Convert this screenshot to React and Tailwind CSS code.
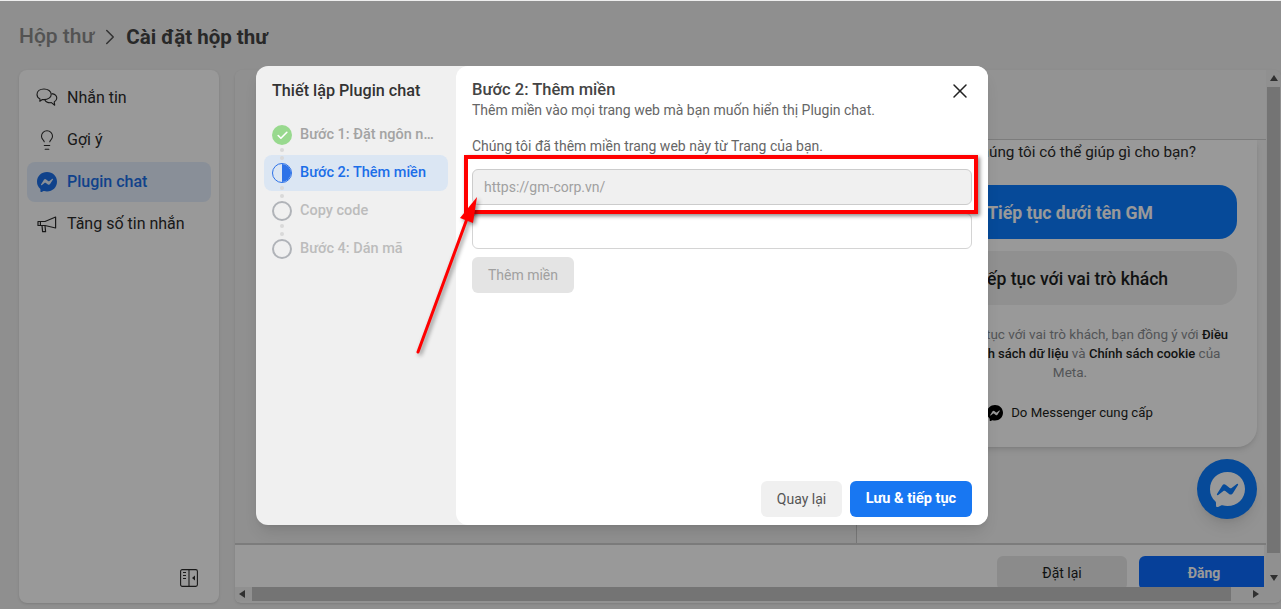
import React from "react";
import { SiMessenger } from "react-icons/si";
import { ChevronRight, Lightbulb, X, Check } from "lucide-react";

const font = { fontFamily: '"Roboto", "Liberation Sans", sans-serif' };

function ChatIcon() {
  return (
    <svg width="22" height="20" viewBox="0 0 22 20" fill="none" stroke="currentColor" strokeWidth="1.1" strokeLinejoin="round" className="shrink-0">
      <path d="M8 1C4 1 1 3.2 1 6.4c0 2 1.2 3.6 3 4.5l-.2 2.4 2.6-1.8c.5.1 1 .1 1.6.1 4 0 7.2-2.2 7.2-5.2C15.2 3.2 12 1 8 1z" />
      <path d="M15.6 5.6c2.9.4 5.2 2 5.2 4.5 0 1.7-1 3-2.6 3.8l.5 3.3-3.3-2.6c-.3 0-.6.1-1 .1-2.6 0-4.9-1.2-5.6-3" />
    </svg>
  );
}

function MegaphoneIcon() {
  return (
    <svg width="20" height="18" viewBox="0 0 20 18" fill="none" stroke="currentColor" strokeWidth="1.2" strokeLinejoin="round" className="shrink-0">
      <path d="M1 6.5h7L18.6 2v11L8 10.5H1z" />
      <path d="M5 10.5l.6 6.2h3L8 10.8" />
      <path d="M3.4 6.5v4" />
    </svg>
  );
}

function CollapseIcon() {
  return (
    <svg width="18" height="18" viewBox="0 0 18 18" fill="none" stroke="#2b2b2b" strokeWidth="1.1">
      <rect x="0.6" y="0.6" width="16.8" height="16.8" rx="1.6" />
      <path d="M9 0.6v16.8M3 3.5h3M3 6.5h3M3 9.5h3" />
      <path d="M15 6.5v5l-3-2.5z" fill="#2b2b2b" stroke="none" />
    </svg>
  );
}

function Arrow({ dir }) {
  const pts = { up: "5,1 9,7 1,7", down: "1,2 9,2 5,8", left: "7,1 7,9 1,5", right: "3,1 3,9 9,5" }[dir];
  return (
    <svg width="10" height="10" viewBox="0 0 10 10" className="shrink-0">
      <polygon points={pts} fill="#505050" />
    </svg>
  );
}

function NavItem({ icon, label, active }) {
  return (
    <div className={`flex h-10 items-center gap-[9px] rounded-lg pl-[9px] text-base ${active ? "bg-[#e4effd] font-medium text-[#1b6ee8]" : "text-[#2b2b2b]"}`}>
      <span className="flex w-[22px] justify-center">{icon}</span>
      <span>{label}</span>
    </div>
  );
}

function Step({ status, label }) {
  let circle;
  if (status === "done") {
    circle = (
      <span className="flex h-5 w-5 items-center justify-center rounded-full bg-[#98d98e]">
        <Check size={13} strokeWidth={3} color="#fff" />
      </span>
    );
  } else if (status === "active") {
    circle = (
      <span className="flex h-5 w-5 overflow-hidden rounded-full border border-[#2d72e8]">
        <span className="w-1/2" />
        <span className="w-1/2 bg-[#2d72e8]" />
      </span>
    );
  } else {
    circle = <span className="h-5 w-5 rounded-full border-2 border-[#b0b3b8]" />;
  }
  const text = status === "done" ? "text-[#a3a3a3]" : status === "active" ? "text-[#1b6ee8]" : "text-[#bcbcbc]";
  return (
    <div className={`flex h-9 items-center gap-2 rounded-lg pl-2 text-[14.5px] font-medium ${status === "active" ? "bg-[#dbe6f3]" : ""} ${text}`}>
      {circle}
      <span className="w-[135px] truncate leading-[18px]">{label}</span>
    </div>
  );
}

function Dots({ top }) {
  return (
    <div className="pointer-events-none absolute left-[24px] flex flex-col gap-1" style={{ top }}>
      <span className="h-1 w-1 rounded-full bg-[#d9d9d9]" />
      <span className="h-1 w-1 rounded-full bg-[#d9d9d9]" />
    </div>
  );
}

export default function App() {
  return (
    <div className="relative h-[609px] w-full overflow-hidden bg-[#eeeeee]" style={font}>
      <div className="flex h-[70px] items-center pl-[19px] pt-1">
        <span className="text-[21px] font-medium text-[#8a8a8a]">Hộp thư</span>
        <ChevronRight size={26} strokeWidth={1.4} color="#555" className="mx-[3px]" />
        <span className="text-[20.5px] font-bold text-[#444444]">Cài đặt hộp thư</span>
      </div>

      <div className="flex h-[533px] gap-4 pl-[19px]">
        <aside className="flex w-[200px] flex-col justify-between rounded-lg bg-white px-2 pb-4 pt-2 shadow-sm">
          <nav className="flex flex-col gap-[2px]">
            <NavItem icon={<ChatIcon />} label="Nhắn tin" />
            <NavItem icon={<Lightbulb size={24} strokeWidth={1.15} />} label="Gợi ý" />
            <NavItem icon={<SiMessenger size={20} color="#1b6ee8" />} label="Plugin chat" active />
            <NavItem icon={<MegaphoneIcon />} label="Tăng số tin nhắn" />
          </nav>
          <div className="flex justify-end pr-[13px]">
            <CollapseIcon />
          </div>
        </aside>

        <main className="flex min-w-0 flex-1 flex-col overflow-hidden rounded-t-lg rounded-b-md bg-[#f4f4f4] shadow-sm">
          <div className="flex h-[517px] shrink-0">
            <div className="flex min-w-0 flex-1 flex-col">
              <div className="flex h-[475px] shrink-0 border-b-2 border-[#cfcfcf]">
                <div className="w-[622px] border-r border-[#c6c6c6] bg-[#f0f0f0]" />
                <div className="flex flex-1 flex-col bg-[#f5f5f5]">
                  <div className="h-[70px] border-b border-[#d0d0d0]" />
                  <div className="flex justify-end pr-[9px]">
                    <section className="flex h-[307px] w-[374px] flex-col items-center rounded-b-[20px] bg-white px-5 pt-[2px] shadow-md">
                      <p className="mr-[41px] self-end text-[15.3px] leading-5 text-[#2b2b2b]">Chúng tôi có thể giúp gì cho bạn?</p>
                      <button className="mt-[23px] h-[54px] w-full rounded-[18px] bg-[#0a7cff] pt-[2px] text-[17.6px] font-bold text-white">Tiếp tục dưới tên GM</button>
                      <button className="mt-3 h-[54px] w-full rounded-[18px] bg-[#f0f0f0] pt-[2px] text-[17.6px] font-medium text-[#1c1e21]">Tiếp tục với vai trò khách</button>
                      <p className="mt-5 w-[330px] text-center text-[13.5px] leading-[18px] text-[#8a8d91]">
                        Khi bạn tiếp tục với vai trò khách, bạn đồng ý với <span className="text-[13px] font-medium text-[#1c1e21]">Điều</span> <span className="text-[13px] font-medium text-[#1c1e21]">khoản, Chính sách dữ liệu</span> và <span className="text-[13px] font-medium text-[#1c1e21]">Chính sách cookie</span> của Meta.
                      </p>
                      <div className="mt-6 flex items-center gap-2 text-[13.2px] leading-4 text-[#1c1e21]">
                        <SiMessenger size={16} color="#000" />
                        <span>Do Messenger cung cấp</span>
                      </div>
                    </section>
                  </div>
                </div>
              </div>
              <div className="flex h-[42px] justify-end gap-3 overflow-hidden border-r-2 border-[#f4f4f4] bg-white pt-[11px]">
                <button className="h-[34px] w-[130px] shrink-0 rounded-md bg-[#e8e8e8] text-sm text-[#1c1e21]">Đặt lại</button>
                <button className="-mr-[5px] h-[34px] w-[130px] shrink-0 rounded-md bg-[#0a6cff] text-sm font-bold text-white">Đăng</button>
              </div>
            </div>
            <div className="flex w-[15px] shrink-0 flex-col items-center bg-[#f1f1f1] py-[4px]">
              <Arrow dir="up" />
              <div className="mt-[3px] h-[466px] w-[13px] bg-[#c1c1c1]" />
              <div className="mt-auto"><Arrow dir="down" /></div>
            </div>
          </div>
          <div className="flex h-[14px] shrink-0 items-center bg-[#f1f1f1] pl-[3px]">
            <Arrow dir="left" />
            <div className="ml-1 h-[14px] w-[979px] bg-[#c1c1c1]" />
            <div className="ml-[19px]"><Arrow dir="right" /></div>
          </div>
        </main>
      </div>

      <button className="absolute left-[1197px] top-[459px] flex h-[60px] w-[60px] items-center justify-center rounded-full bg-[#0a7cff] shadow-lg">
        <SiMessenger size={35} color="#fff" />
      </button>

      <div className="absolute inset-x-0 bottom-0 top-[1px] bg-black/40" />

      <div className="absolute left-[256px] top-[66px] flex h-[459px] w-[732px] rounded-xl bg-[#f0f0f0] shadow-lg">
        <div className="relative w-[200px] shrink-0 px-2 pt-[15px]">
          <h2 className="pl-2 text-[16.2px] font-medium leading-5 text-[#333]">Thiết lập Plugin chat</h2>
          <div className="mt-4 flex flex-col gap-[2px]">
            <Step status="done" label="Bước 1: Đặt ngôn ngữ" />
            <Step status="active" label="Bước 2: Thêm miền" />
            <Step status="todo" label="Copy code" />
            <Step status="todo" label="Bước 4: Dán mã" />
          </div>
          <Dots top={82} />
          <Dots top={120} />
          <Dots top={158} />
        </div>
        <div className="flex flex-1 flex-col rounded-xl bg-white px-4 pb-2 pt-[15px]">
          <div className="flex items-start justify-between">
            <div>
              <h3 className="text-[16.5px] font-medium leading-[18px] text-[#444]">Bước 2: Thêm miền</h3>
              <p className="mt-[2px] text-sm leading-[18px] text-[#666]">Thêm miền vào mọi trang web mà bạn muốn hiển thị Plugin chat.</p>
            </div>
            <X size={24} strokeWidth={1.5} color="#222" className="-mt-[2px]" />
          </div>
          <p className="mt-[18px] text-sm leading-[18px] text-[#666]">Chúng tôi đã thêm miền trang web này từ Trang của bạn.</p>
          <input disabled value="https://gm-corp.vn/" className="mt-[14px] h-9 w-full rounded-md border border-[#cccccc] bg-[#f0f0f0] px-[11px] text-sm text-[#a0a0a0]" />
          <input disabled className="mt-2 h-9 w-full rounded-md border border-[#d4d4d4] bg-white px-3 text-sm" />
          <button className="mt-2 h-9 w-[102px] rounded-md bg-[#e4e4e4] text-sm text-[#a0a0a0]">Thêm miền</button>
          <div className="mt-auto flex justify-end gap-2">
            <button className="h-9 w-[81px] rounded-md bg-[#f0f0f0] text-sm text-[#555]">Quay lại</button>
            <button className="h-9 w-[122px] rounded-md bg-[#1877f2] text-[14.5px] font-bold text-white">Lưu &amp; tiếp tục</button>
          </div>
        </div>
      </div>

      <div className="absolute left-[464px] top-[155px] h-[59px] w-[514px] border-4 border-[#ff0000] shadow-[2px_2px_4px_rgba(0,0,0,0.45)]" />
      <svg className="absolute left-[410px] top-[190px]" width="80" height="170" viewBox="0 0 80 170" fill="none" style={{ filter: "drop-shadow(2px 2px 2px rgba(0,0,0,0.45))" }}>
        <line x1="8" y1="162" x2="58" y2="26" stroke="#ff0000" strokeWidth="3" strokeLinecap="round" />
        <polygon points="67,7 50,28 63,33" fill="#ff0000" />
      </svg>
    </div>
  );
}
